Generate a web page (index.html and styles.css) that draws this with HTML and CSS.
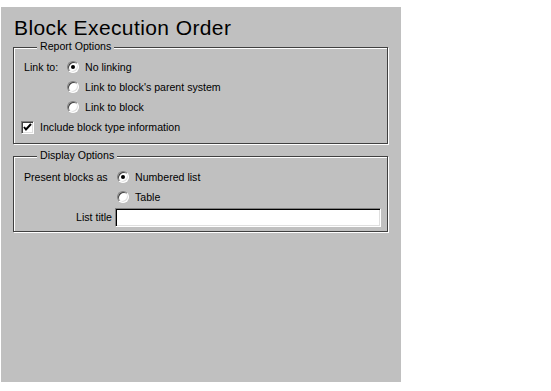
FILE: index.html
```html
<!DOCTYPE html>
<html lang="en">
<head>
  <meta charset="UTF-8" />
  <title>Block Execution Order</title>
  <link rel="stylesheet" href="styles.css">
</head>
<body>
  <div class="panel">
    <h1 class="title">Block Execution Order</h1>

    <div class="group report">
      <span class="legend">Report Options</span>
      <div class="grid link-grid">
        <span class="label">Link to:</span>
        <label class="option"><span class="radio checked"></span>No linking</label>
        <span></span>
        <label class="option"><span class="radio"></span>Link to block's parent system</label>
        <span></span>
        <label class="option"><span class="radio"></span>Link to block</label>
        <label class="option check-row"><span class="checkbox">
          <svg width="9" height="9" viewBox="0 0 9 9"><path d="M1 4 L3 6.5 L8 1" fill="none" stroke="#000" stroke-width="2"/></svg>
        </span>Include block type information</label>
      </div>
    </div>

    <div class="group display">
      <span class="legend">Display Options</span>
      <div class="grid display-grid">
        <span class="label">Present blocks as</span>
        <label class="option"><span class="radio checked"></span>Numbered list</label>
        <span></span>
        <label class="option"><span class="radio"></span>Table</label>
        <span class="label right">List title</span>
        <input class="textbox" type="text">
      </div>
    </div>
  </div>
</body>
</html>
```

FILE: styles.css
```css
body {
  margin: 0;
  background: #fff;
  font-family: "Liberation Sans", Arial, sans-serif;
  font-size: 10.6px;
  color: #000;
}

.panel {
  margin: 7px 0 0 1px;
  width: 400px;
  height: 375px;
  background: #c0c0c0;
  padding-top: 1px;
  box-sizing: border-box;
}

.title {
  margin: 0;
  padding: 8px 0 0 13px;
  height: 39px;
  box-sizing: border-box;
  font-size: 21px;
  font-weight: normal;
  letter-spacing: 0.4px;
  line-height: 24px;
}

.group {
  position: relative;
  margin-left: 12px;
  width: 375px;
  box-sizing: border-box;
  border: 1px solid #404040;
  box-shadow: inset 1px 1px 0 #fff, 1px 1px 0 #fff;
}

.report {
  height: 97px;
  padding: 9px 0 0 10px;
}

.display {
  margin-top: 12px;
  height: 76px;
  padding: 10px 0 0 10px;
}

.legend {
  position: absolute;
  top: -8px;
  left: 23px;
  padding: 0 3px;
  background: #c0c0c0;
  line-height: 13px;
}

.grid {
  display: grid;
  grid-auto-rows: 20px;
  align-items: center;
}

.link-grid {
  grid-template-columns: 43px 1fr;
}

.display-grid {
  grid-template-columns: 89px 1fr;
}

.label {
  white-space: nowrap;
}

.right {
  text-align: right;
  padding-right: 1px;
}

.option {
  display: flex;
  align-items: center;
  gap: 6px;
}

.display-grid .option {
  margin-left: 4px;
}

.check-row {
  grid-column: span 2;
  margin-left: -3px;
}

.radio {
  position: relative;
  width: 12px;
  height: 12px;
  box-sizing: border-box;
  border-radius: 50%;
  background: #fff;
  border: 1px solid;
  border-color: #808080 #fff #fff #808080;
  box-shadow: inset 1px 1px 0 #404040, inset -1px -1px 0 #dfdfdf;
}

.radio.checked::after {
  content: "";
  position: absolute;
  left: 3px;
  top: 3px;
  width: 4px;
  height: 4px;
  border-radius: 50%;
  background: #000;
}

.checkbox {
  display: flex;
  align-items: center;
  justify-content: center;
  width: 13px;
  height: 13px;
  box-sizing: border-box;
  background: #fff;
  border: 1px solid;
  border-color: #808080 #fff #fff #808080;
  box-shadow: inset 1px 1px 0 #404040, inset -1px -1px 0 #dfdfdf;
}

.textbox {
  margin-left: 2px;
  width: 266px;
  height: 19px;
  box-sizing: border-box;
  background: #fff;
  border: 1px solid;
  border-color: #808080 #fff #fff #808080;
  box-shadow: inset 1px 1px 0 #000, inset -1px -1px 0 #dfdfdf;
  padding: 0 2px;
  font: inherit;
  outline: none;
}
```
